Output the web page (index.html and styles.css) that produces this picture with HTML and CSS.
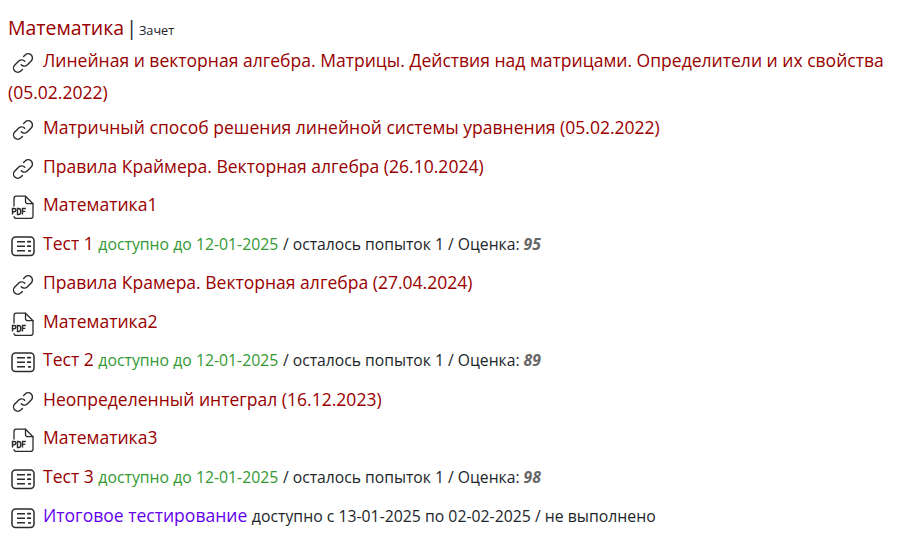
FILE: index.html
```html
<!DOCTYPE html>
<html lang="ru">
<head>
<meta charset="utf-8">
<title>Математика</title>
<link rel="stylesheet" href="styles.css">
</head>
<body>
<svg class="defs" width="0" height="0" aria-hidden="true">
  <symbol id="link" viewBox="0 0 24 24">
    <path d="M10.2 13.8a4.2 4.2 0 0 0 6 .1l4-4a4.2 4.2 0 0 0-6-6l-1.6 1.6" fill="none" stroke="currentColor" stroke-width="1.4" stroke-linecap="round"/>
    <path d="M13.8 10.2a4.2 4.2 0 0 0-6-.1l-4 4a4.2 4.2 0 0 0 6 6l1.6-1.6" fill="none" stroke="currentColor" stroke-width="1.4" stroke-linecap="round"/>
  </symbol>
  <symbol id="pdf" viewBox="0 0 24 24">
    <path d="M3 11V3.500A2.300 2.300 0 0 1 5.300 1.200h9.200l7.500 7.500v12.500a2.300 2.300 0 0 1-2.300 2.300H5.300A2.300 2.300 0 0 1 3 21.700" fill="none" stroke="currentColor" stroke-width="1.300" stroke-linecap="round" stroke-linejoin="round"/>
    <path d="M14.500 1.200v5a2.500 2.500 0 0 0 2.500 2.500h5" fill="none" stroke="currentColor" stroke-width="1.300" stroke-linecap="round"/>
    <path d="M1.500 19.500V13.500h1.800a1.500 1.500 0 0 1 0 3.200H1.500M6.500 13.500v6h1a2.200 2.200 0 0 0 2.200-2.200v-1.600a2.200 2.200 0 0 0-2.200-2.200zM11.500 19.500v-6h3.400M11.500 16.400h2.800" fill="none" stroke="currentColor" stroke-width="1.400"/>
  </symbol>
  <symbol id="test" viewBox="0 0 24 24">
    <rect x="1" y="3" width="22" height="18.500" rx="3.500" fill="none" stroke="currentColor" stroke-width="1.500"/>
    <path d="M6 7.700h8M6 12.200h8M6 16.800h8" fill="none" stroke="currentColor" stroke-width="1.500"/>
    <path d="M16.800 7.700h2.500M16.800 12.200h2.500M17.800 16.800h1.500" fill="none" stroke="currentColor" stroke-width="1.800" stroke-linecap="round"/>
  </symbol>
</svg>
<main class="course">
  <h1 class="title"><span class="title-name">Математика</span> | <small class="title-kind">Зачет</small></h1>
  <ul class="items">
    <li class="item item-first"><svg class="icon icon-link"><use href="#link"/></svg><a class="name">Линейная и векторная алгебра. Матрицы. Действия над матрицами. Определители и их свойства (05.02.2022)</a></li>
    <li class="item"><svg class="icon icon-link"><use href="#link"/></svg><a class="name">Матричный способ решения линейной системы уравнения (05.02.2022)</a></li>
    <li class="item"><svg class="icon icon-link"><use href="#link"/></svg><a class="name">Правила Краймера. Векторная алгебра (26.10.2024)</a></li>
    <li class="item"><svg class="icon icon-pdf"><use href="#pdf"/></svg><a class="name">Математика1</a></li>
    <li class="item"><svg class="icon icon-test"><use href="#test"/></svg><a class="name">Тест 1</a> <span class="avail">доступно до 12-01-2025</span> <span class="meta">/ осталось попыток 1 / Оценка: <b class="score">95</b></span></li>
    <li class="item"><svg class="icon icon-link"><use href="#link"/></svg><a class="name">Правила Крамера. Векторная алгебра (27.04.2024)</a></li>
    <li class="item"><svg class="icon icon-pdf"><use href="#pdf"/></svg><a class="name">Математика2</a></li>
    <li class="item"><svg class="icon icon-test"><use href="#test"/></svg><a class="name">Тест 2</a> <span class="avail">доступно до 12-01-2025</span> <span class="meta">/ осталось попыток 1 / Оценка: <b class="score">89</b></span></li>
    <li class="item"><svg class="icon icon-link"><use href="#link"/></svg><a class="name">Неопределенный интеграл (16.12.2023)</a></li>
    <li class="item"><svg class="icon icon-pdf"><use href="#pdf"/></svg><a class="name">Математика3</a></li>
    <li class="item"><svg class="icon icon-test"><use href="#test"/></svg><a class="name">Тест 3</a> <span class="avail">доступно до 12-01-2025</span> <span class="meta">/ осталось попыток 1 / Оценка: <b class="score">98</b></span></li>
    <li class="item"><svg class="icon icon-test"><use href="#test"/></svg><a class="name name-final">Итоговое тестирование</a> <span class="meta meta-final">доступно с 13-01-2025 по 02-02-2025 / не выполнено</span></li>
  </ul>
</main>
</body>
</html>
```
FILE: styles.css
```css
* { box-sizing: border-box; }
html, body { margin: 0; background: #fff; }
body {
  font-family: "Open Sans", "Noto Sans", sans-serif;
  color: #212529;
}
.defs { position: absolute; }
.course { padding: 14px 8px 0; }
.title {
  margin: 0;
  font-size: 19.5px;
  font-weight: 400;
  line-height: 28px;
  word-spacing: -3px;
  color: #212529;
}
.title-name { color: #990000; }
.title-kind { font-size: 12.7px; }
.items { list-style: none; margin: 0; padding: 0; }
.item {
  font-size: 17.55px;
  line-height: 32px;
  margin-bottom: 6.5px;
  color: #212529;
}
.item-first { margin-bottom: 3px; }
.name { color: #990000; }
.name-final { color: #6200ee; }
.icon {
  display: inline-block;
  width: 24px;
  height: 24px;
  vertical-align: -8px;
  color: #2b2b2b;
  margin-left: 3px;
  margin-right: 8px;
}
.avail { font-size: 15.8px; color: #339933; }
.meta { font-size: 15.7px; }
.meta-final { font-size: 15.8px; }
.score { font-style: italic; color: #666; }
```
